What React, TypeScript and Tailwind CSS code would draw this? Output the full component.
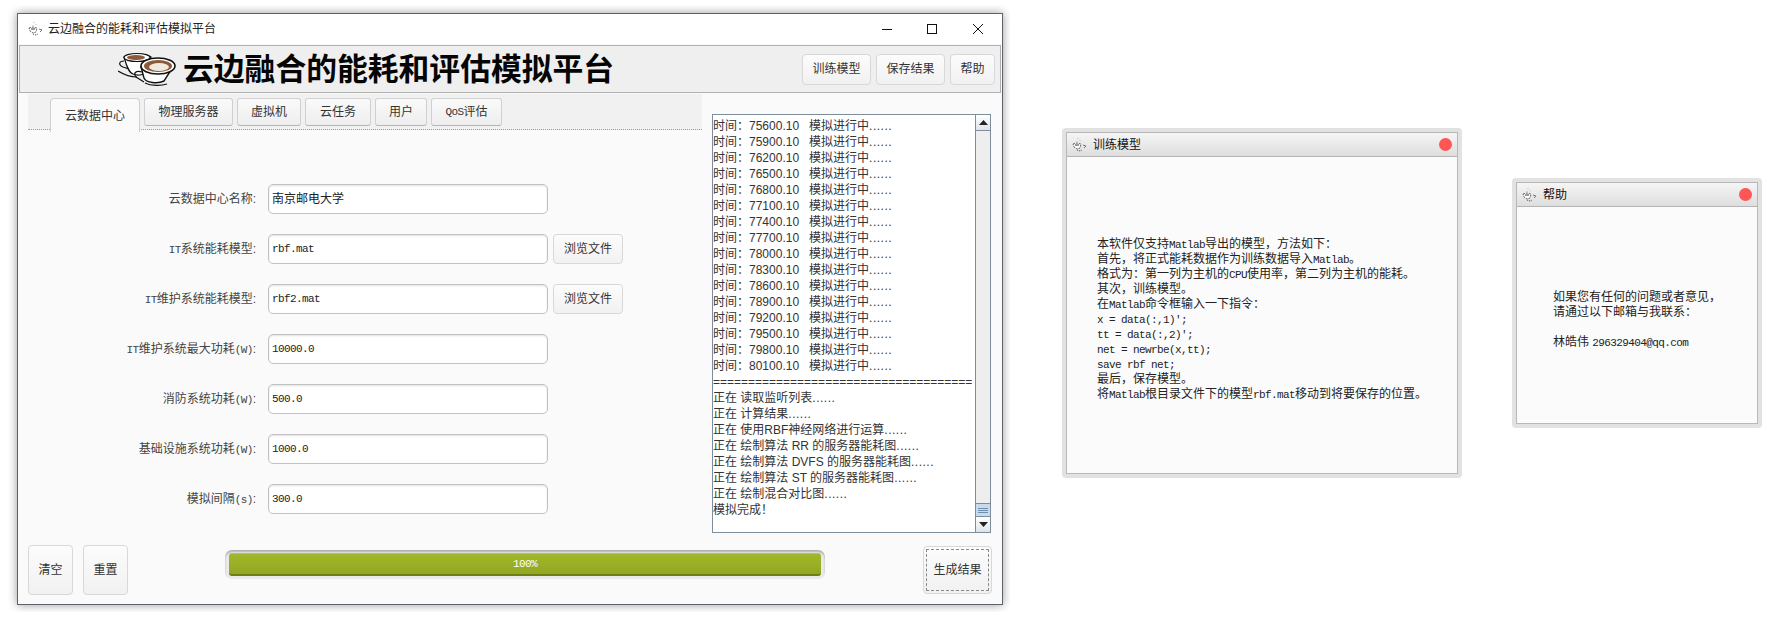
import type { ReactNode } from "react";

const sans = "[font-family:'Liberation_Sans','Noto_Sans_CJK_SC',sans-serif]";

function L({ children }: { children: ReactNode }) {
  return <span className="[font-family:'Liberation_Mono',monospace] text-[11px] leading-none tracking-[-0.6px]">{children}</span>;
}

function Dots() {
  return <span className="tracking-[0.5px]">......</span>;
}

function JavaIcon({ className }: { className: string }) {
  return (
    <svg viewBox="0 0 16 16" className={className}>
      <path d="M6 1v1M8 3v1M5 4v1" stroke="#bbb" strokeWidth="1" />
      <path d="M1 7l4-1 4 1-1 4-3 1-3-2z" fill="#fff" stroke="#666" strokeWidth="1" strokeDasharray="2 1" />
      <path d="M3 8h4" stroke="#333" strokeWidth="1" />
      <path d="M11 8l3 1-2 2" fill="none" stroke="#777" strokeWidth="1" />
      <path d="M5 13l3 1 2-1" fill="none" stroke="#444" strokeWidth="1" strokeDasharray="1 1" />
    </svg>
  );
}

function Cups() {
  return (
    <svg viewBox="0 0 58 34" className="w-[58px] h-[34px] shrink-0">
      <path d="M6 5c6-4 22-4 27 0l-4 14c-2 4-9 5-14 3C10 20 8 12 6 5z" fill="#fff" stroke="#111" strokeWidth="1.2" />
      <ellipse cx="19" cy="5.5" rx="13" ry="4" fill="#fff" stroke="#111" strokeWidth="1.2" />
      <ellipse cx="18" cy="5.5" rx="9" ry="2.6" fill="#8a5a3a" />
      <path d="M6 9C1 9 0 13 5 15l6 2M0 19c5 3 12 6 19 6" fill="none" stroke="#111" strokeWidth="1.2" />
      <path d="M23 15l3 11c2 5 14 6 20 3l9-14z" fill="#fff" stroke="#111" strokeWidth="1.4" />
      <path d="M24 20c-6-2-9 1-6 5l8 5M27 31c6 3 16 3 22 1" fill="none" stroke="#111" strokeWidth="1.2" />
      <ellipse cx="40" cy="14" rx="17" ry="8" fill="#fff" stroke="#111" strokeWidth="1.6" />
      <ellipse cx="40" cy="14" rx="14" ry="6" fill="#8a5a3a" />
      <ellipse cx="41" cy="15" rx="10" ry="4" fill="#efe9e0" />
    </svg>
  );
}

function Btn({ children, className }: { children: ReactNode; className: string }) {
  return (
    <div className={`flex items-center justify-center rounded-[4px] border border-[#d8d8d8] bg-gradient-to-b from-[#fcfcfc] to-[#f1f1f1] text-[12px] text-[#333] shrink-0 ${className}`}>
      {children}
    </div>
  );
}

const tabs: { label: ReactNode; w: string }[] = [
  { label: "物理服务器", w: "w-[89px]" },
  { label: "虚拟机", w: "w-[64px]" },
  { label: "云任务", w: "w-[66px]" },
  { label: "用户", w: "w-[52px]" },
  { label: <><L>QoS</L>评估</>, w: "w-[71px]" },
];

const rows: { label: ReactNode; value: ReactNode; browse?: boolean }[] = [
  { label: "云数据中心名称:", value: <span className="text-[12px]">南京邮电大学</span> },
  { label: <><L>IT</L>系统能耗模型:</>, value: <L>rbf.mat</L>, browse: true },
  { label: <><L>IT</L>维护系统能耗模型:</>, value: <L>rbf2.mat</L>, browse: true },
  { label: <><L>IT</L>维护系统最大功耗<L>(W)</L>:</>, value: <L>10000.0</L> },
  { label: <>消防系统功耗<L>(W)</L>:</>, value: <L>500.0</L> },
  { label: <>基础设施系统功耗<L>(W)</L>:</>, value: <L>1000.0</L> },
  { label: <>模拟间隔<L>(s)</L>:</>, value: <L>300.0</L> },
];

const times = Array.from({ length: 17 }, (_, i) => (75300 + i * 300).toFixed(2).slice(0, -2) + "10");

const results = [
  "正在 读取监听列表",
  "正在 计算结果",
  "正在 使用RBF神经网络进行运算",
  "正在 绘制算法 RR 的服务器能耗图",
  "正在 绘制算法 DVFS 的服务器能耗图",
  "正在 绘制算法 ST 的服务器能耗图",
  "正在 绘制混合对比图",
];

function Dialog({ title, className, bodyClass, children }: { title: string; className: string; bodyClass: string; children: ReactNode }) {
  return (
    <div className={`absolute rounded-[4px] bg-[#e2e2e2] p-[4px] ${className}`}>
      <div className="flex flex-col h-full border border-[#b8b8b8] bg-[#fbfbfb]">
        <div className="flex items-center h-[24px] shrink-0 border-b border-[#b4b4b4] bg-gradient-to-b from-[#f5f5f5] to-[#dedede] pl-[5px] pr-[5px]">
          <JavaIcon className="w-[16px] h-[16px]" />
          <span className="ml-[5px] text-[12px] text-[#111]">{title}</span>
          <span className="ml-auto w-[13px] h-[13px] rounded-full bg-[#ff5555]" />
        </div>
        <div className={`text-[12px] leading-[15px] text-[#222] whitespace-nowrap ${bodyClass}`}>{children}</div>
      </div>
    </div>
  );
}

export default function App() {
  return (
    <div className={`relative w-[1774px] h-[625px] overflow-hidden bg-white ${sans}`}>
      {/* main window, shadow gets cut off by the wrapper */}
      <div className="absolute left-[8px] top-[5px] w-[1002px] h-[607px] overflow-hidden p-[8px_7px_7px_9px]">
        <div className="flex flex-col w-[986px] h-[592px] border border-[#5c6268] bg-[#fafafa] shadow-[0_0_9px_rgba(0,0,0,0.4)]">
          <div className="flex items-center h-[30px] shrink-0 bg-white pl-[10px] text-[12px] text-[#222]">
            <JavaIcon className="w-[16px] h-[16px]" />
            <span className="ml-[4px]">云边融合的能耗和评估模拟平台</span>
            <div className="ml-auto flex items-center">
              <svg viewBox="0 0 10 10" className="w-[10px] h-[10px]"><path d="M0 5.5h10" stroke="#111" strokeWidth="1" /></svg>
              <svg viewBox="0 0 10 10" className="w-[10px] h-[10px] ml-[35px]"><rect x="0.5" y="0.5" width="9" height="9" fill="none" stroke="#111" strokeWidth="1" /></svg>
              <svg viewBox="0 0 10 10" className="w-[10px] h-[10px] ml-[36px] mr-[19px]"><path d="M0 0l10 10M10 0L0 10" stroke="#111" strokeWidth="1" /></svg>
            </div>
          </div>
          <div className="flex items-center h-[48px] shrink-0 mx-[1px] mt-[1px] border border-[#b0b0b0] bg-[#efefef] pl-[98px] pr-[5px]">
            <Cups />
            <span className="ml-[7px] mb-[3px] text-[30.8px] leading-none font-bold text-[#050505] [font-family:'Noto_Sans_CJK_SC',sans-serif]">云边融合的能耗和评估模拟平台</span>
            <div className="ml-auto flex gap-[5px]">
              <Btn className="w-[69px] h-[31px]">训练模型</Btn>
              <Btn className="w-[69px] h-[31px]">保存结果</Btn>
              <Btn className="w-[45px] h-[31px]">帮助</Btn>
            </div>
          </div>

          <div className="flex flex-1">
            <div className="w-[684px] pl-[10px] pt-[1px] shrink-0">
              <div className="flex items-start h-[36px] w-[674px] bg-[#f1f1f1] border-b border-dotted border-[#999] pl-[22px] pt-[4px]">
                <div className="relative z-10 flex items-center justify-center w-[90px] h-[34px] rounded-t-[4px] border border-b-0 border-[#cfcfcf] bg-[#fafafa] text-[12px] text-[#333]">云数据中心</div>
                <div className="flex gap-[4px] ml-[4px]">
                  {tabs.map((t, i) => (
                    <div key={i} className={`flex items-center justify-center h-[28px] rounded-[3px] border border-[#d0d0d0] border-b-[#b5b5b5] bg-gradient-to-b from-[#fafafa] to-[#eeeeee] text-[12px] text-[#333] ${t.w}`}>
                      {t.label}
                    </div>
                  ))}
                </div>
              </div>
              <div className="flex flex-col gap-[20px] pt-[54px]">
                {rows.map((r, i) => (
                  <div key={i} className="flex items-center h-[30px]">
                    <div className="w-[228px] shrink-0 text-right text-[12px] text-[#444] whitespace-nowrap">{r.label}</div>
                    <div className="ml-[12px] flex items-center w-[280px] h-[30px] rounded-[5px] border border-[#c2c2c2] bg-white shadow-[inset_0_1px_2px_rgba(0,0,0,0.12)] pl-[3px] text-[#222]">
                      {r.value}
                    </div>
                    {r.browse && <Btn className="ml-[5px] w-[70px] h-[30px]">浏览文件</Btn>}
                  </div>
                ))}
              </div>
            </div>

            <div className="ml-[10px] mt-[21px] flex w-[279px] h-[419px] border border-[#7d8d9c] bg-white overflow-hidden">
              <div className="flex-1 overflow-hidden text-[12px] leading-[16px] text-[#333] whitespace-nowrap">
                <div className="-mt-[13px]">
                  {times.map((t) => (
                    <div key={t}>时间：{t}&nbsp;&nbsp;&nbsp;模拟进行中<Dots /></div>
                  ))}
                  <div>=====================================</div>
                  {results.map((r) => (
                    <div key={r}>{r}<Dots /></div>
                  ))}
                  <div>模拟完成！</div>
                </div>
              </div>
              <div className="flex flex-col w-[15px] shrink-0 border-l border-[#7d8d9c] bg-[#eeeeee]">
                <div className="flex items-center justify-center h-[16px] border-b border-[#7d8d9c] bg-gradient-to-b from-white to-[#dfe3e8]">
                  <svg viewBox="0 0 9 5" className="w-[9px] h-[5px]"><path d="M4.5 0L9 5H0z" fill="#222" /></svg>
                </div>
                <div className="flex-1" />
                <div className="flex flex-col justify-center gap-[1px] h-[14px] border-y border-[#7d8d9c] bg-[#c8daec] px-[2px]">
                  <div className="h-[1px] bg-[#6f8fb0]" />
                  <div className="h-[1px] bg-[#6f8fb0]" />
                  <div className="h-[1px] bg-[#6f8fb0]" />
                </div>
                <div className="flex items-center justify-center h-[15px] bg-gradient-to-b from-white to-[#dfe3e8]">
                  <svg viewBox="0 0 9 5" className="w-[9px] h-[5px]"><path d="M0 0h9L4.5 5z" fill="#222" /></svg>
                </div>
              </div>
            </div>
          </div>

          <div className="flex items-start h-[59px] shrink-0 pl-[10px]">
            <Btn className="w-[45px] h-[50px]">清空</Btn>
            <Btn className="ml-[10px] w-[45px] h-[50px]">重置</Btn>
            <div className="ml-[97px] mt-[5px] w-[600px] h-[29px] rounded-[7px] bg-[#eaeaea] shadow-[inset_0_2px_2px_rgba(0,0,0,0.25)] pt-[3px] px-[4px] shrink-0">
              <div className="flex items-center justify-center h-[23px] rounded-[3px] border-t border-t-[#b8c83c] border-b-2 border-b-[#6f8012] bg-gradient-to-b from-[#a3b72c] to-[#93a622] text-white">
                <L>100%</L>
              </div>
            </div>
            <div className="ml-[98px] mt-[1px] w-[69px] h-[48px] shrink-0 rounded-[4px] border border-[#d8d8d8] bg-gradient-to-b from-[#fcfcfc] to-[#f1f1f1] p-[2px]">
              <div className="flex items-center justify-center h-full border border-dashed border-[#888] text-[12px] text-[#333]">生成结果</div>
            </div>
          </div>
        </div>
      </div>

      <Dialog title="训练模型" className="left-[1062px] top-[128px] w-[400px] h-[350px]" bodyClass="pl-[30px] pt-[80px]">
        <div>本软件仅支持<L>Matlab</L>导出的模型，方法如下：</div>
        <div>首先，将正式能耗数据作为训练数据导入<L>Matlab</L>。</div>
        <div>格式为：第一列为主机的<L>CPU</L>使用率，第二列为主机的能耗。</div>
        <div>其次，训练模型。</div>
        <div>在<L>Matlab</L>命令框输入一下指令：</div>
        <div><L>x = data(:,1)';</L></div>
        <div><L>tt = data(:,2)';</L></div>
        <div><L>net = newrbe(x,tt);</L></div>
        <div><L>save rbf net;</L></div>
        <div>最后，保存模型。</div>
        <div>将<L>Matlab</L>根目录文件下的模型<L>rbf.mat</L>移动到将要保存的位置。</div>
      </Dialog>

      <Dialog title="帮助" className="left-[1512px] top-[178px] w-[250px] h-[250px]" bodyClass="pl-[36px] pt-[83px]">
        <div>如果您有任何的问题或者意见，</div>
        <div>请通过以下邮箱与我联系：</div>
        <div className="h-[15px]" />
        <div>林皓伟 <L>296329404@qq.com</L></div>
      </Dialog>
    </div>
  );
}
